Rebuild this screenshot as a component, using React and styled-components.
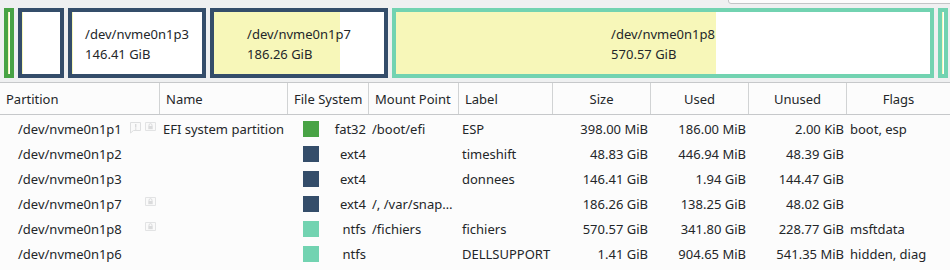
import styled, { createGlobalStyle } from "styled-components";

const GlobalStyle = createGlobalStyle`
  html, body {
    margin: 0;
    padding: 0;
    background: #fcfcfc;
  }
  body {
    font-family: "Noto Sans", "DejaVu Sans", sans-serif;
    font-size: 13px;
    color: #232629;
    overflow: hidden;
  }
`;

const fsColors = {
  fat32: "#48a345",
  ext4: "#344d6a",
  ntfs: "#72d3b1",
};

const USED = "#f7f7b9";

const partitions = [
  { path: "/dev/nvme0n1p1", name: "EFI system partition", fs: "fat32", mount: "/boot/efi", label: "ESP", size: "398.00 MiB", used: "186.00 MiB", unused: "2.00 KiB", flags: "boot, esp", warn: true, lock: true, barWidth: 10, usedPct: 47 },
  { path: "/dev/nvme0n1p2", name: "", fs: "ext4", mount: "", label: "timeshift", size: "48.83 GiB", used: "446.94 MiB", unused: "48.39 GiB", flags: "", barWidth: 46, usedPct: 1 },
  { path: "/dev/nvme0n1p3", name: "", fs: "ext4", mount: "", label: "donnees", size: "146.41 GiB", used: "1.94 GiB", unused: "144.47 GiB", flags: "", barWidth: 138, usedPct: 1, showText: true },
  { path: "/dev/nvme0n1p7", name: "", fs: "ext4", mount: "/, /var/snap…", label: "", size: "186.26 GiB", used: "138.25 GiB", unused: "48.02 GiB", flags: "", lock: true, barWidth: 178, usedPct: 74, showText: true },
  { path: "/dev/nvme0n1p8", name: "", fs: "ntfs", mount: "/fichiers", label: "fichiers", size: "570.57 GiB", used: "341.80 GiB", unused: "228.77 GiB", flags: "msftdata", lock: true, barWidth: 542, usedPct: 60, showText: true },
  { path: "/dev/nvme0n1p6", name: "", fs: "ntfs", mount: "", label: "DELLSUPPORT", size: "1.41 GiB", used: "904.65 MiB", unused: "541.35 MiB", flags: "hidden, diag", barWidth: 10, usedPct: 50 },
];

const columns = "160px 128px 81px 90px 94px 98px 98px 98px 1fr";

const WarnIcon = () => (
  <svg width="13" height="13" viewBox="0 0 13 13">
    <path d="M1.5 1.5h10v8h-7l-3 2.5z" fill="#fafafa" stroke="#dedfe0" strokeWidth="1" />
    <rect x="6" y="3" width="1.4" height="3.6" fill="#d9dadb" />
    <rect x="6" y="7.4" width="1.4" height="1.3" fill="#d9dadb" />
  </svg>
);

const LockIcon = () => (
  <svg width="13" height="13" viewBox="0 0 13 13">
    <path d="M1.5 1.5h10v8h-10z" fill="#fafafa" stroke="#e2e3e4" strokeWidth="1" />
    <path d="M5 5V4.2a1.5 1.5 0 0 1 3 0V5" fill="none" stroke="#dadbdc" strokeWidth="1" />
    <rect x="4.3" y="5" width="4.4" height="3.2" fill="#dadbdc" />
  </svg>
);

export default function App() {
  return (
    <>
      <GlobalStyle />
      <Page>
        <Popup />
        <BarArea>
          {partitions.map((p) => (
            <Part key={p.path} $color={fsColors[p.fs]} $width={p.barWidth}>
              <UsedFill style={{ width: `${p.usedPct}%` }} />
              {p.showText && (
                <PartText>
                  <div>{p.path}</div>
                  <div>{p.size}</div>
                </PartText>
              )}
            </Part>
          ))}
        </BarArea>
        <Header>
          <HeadCell>Partition</HeadCell>
          <HeadCell>Name</HeadCell>
          <HeadCell>File System</HeadCell>
          <HeadCell>Mount Point</HeadCell>
          <HeadCell>Label</HeadCell>
          <HeadCell $center>Size</HeadCell>
          <HeadCell $center>Used</HeadCell>
          <HeadCell $center>Unused</HeadCell>
          <HeadCell $center $last>Flags</HeadCell>
        </Header>
        <Body>
          {partitions.map((p) => (
            <Row key={p.path}>
              <PathCell>
                <span>{p.path}</span>
                <Icons>
                  <IconSlot>{p.warn && <WarnIcon />}</IconSlot>
                  <IconSlot>{p.lock && <LockIcon />}</IconSlot>
                </Icons>
              </PathCell>
              <Cell>{p.name}</Cell>
              <FsCell>
                <Swatch $color={fsColors[p.fs]} />
                <span>{p.fs}</span>
              </FsCell>
              <Cell>{p.mount}</Cell>
              <Cell>{p.label}</Cell>
              <Cell $right>{p.size}</Cell>
              <Cell $right>{p.used}</Cell>
              <Cell $right>{p.unused}</Cell>
              <Cell>{p.flags}</Cell>
            </Row>
          ))}
        </Body>
      </Page>
    </>
  );
}

const Page = styled.div`
  position: relative;
  width: 950px;
  height: 270px;
  background: #fcfcfc;
  overflow: hidden;
`;

const Popup = styled.div`
  position: absolute;
  left: 728px;
  top: -10px;
  width: 260px;
  height: 12px;
  background: #fcfcfc;
  border: 1px solid #c3c5c7;
  border-radius: 3px;
  z-index: 2;
`;

const BarArea = styled.div`
  display: flex;
  gap: 4px;
  height: 83px;
  padding: 8px 0 0 4px;
  box-sizing: border-box;
  background: #eff0f1;
  border-bottom: 1px solid #c6c8ca;
`;

const Part = styled.div`
  position: relative;
  flex: none;
  width: ${(p) => p.$width}px;
  height: 70px;
  box-sizing: border-box;
  border: 4px solid ${(p) => p.$color};
  background: #ffffff;
  display: flex;
  align-items: center;
  justify-content: center;
`;

const UsedFill = styled.div`
  position: absolute;
  left: 0;
  top: 0;
  bottom: 0;
  background: ${USED};
`;

const PartText = styled.div`
  position: relative;
  line-height: 20px;
  white-space: nowrap;
  margin-top: 2px;
`;

const Header = styled.div`
  display: grid;
  grid-template-columns: ${columns};
  height: 31px;
  border-bottom: 1px solid #c6c8ca;
  background: #fcfcfc;
`;

const HeadCell = styled.div`
  display: flex;
  align-items: center;
  justify-content: ${(p) => (p.$center ? "center" : "flex-start")};
  padding-left: ${(p) => (p.$center ? "0" : "6px")};
  border-right: ${(p) => (p.$last ? "none" : "1px solid #d1d3d4")};
  white-space: nowrap;
  overflow: hidden;
`;

const Body = styled.div`
  padding-top: 1px;
  background: #fcfcfc;
`;

const Row = styled.div`
  display: grid;
  grid-template-columns: ${columns};
  height: 25px;
  align-items: center;
`;

const Cell = styled.div`
  padding: 0 3px 0 ${(p) => (p.$right ? "0" : "3px")};
  text-align: ${(p) => (p.$right ? "right" : "left")};
  white-space: nowrap;
  overflow: hidden;
`;

const PathCell = styled.div`
  display: flex;
  align-items: center;
  justify-content: space-between;
  padding: 0 3px 0 18px;
  white-space: nowrap;
`;

const Icons = styled.div`
  display: flex;
  gap: 2px;
  margin-top: -4px;
`;

const IconSlot = styled.div`
  width: 13px;
  height: 13px;
`;

const FsCell = styled.div`
  display: flex;
  align-items: center;
  justify-content: space-between;
  padding: 0 3px 0 15px;
`;

const Swatch = styled.div`
  width: 16px;
  height: 16px;
  background: ${(p) => p.$color};
`;
